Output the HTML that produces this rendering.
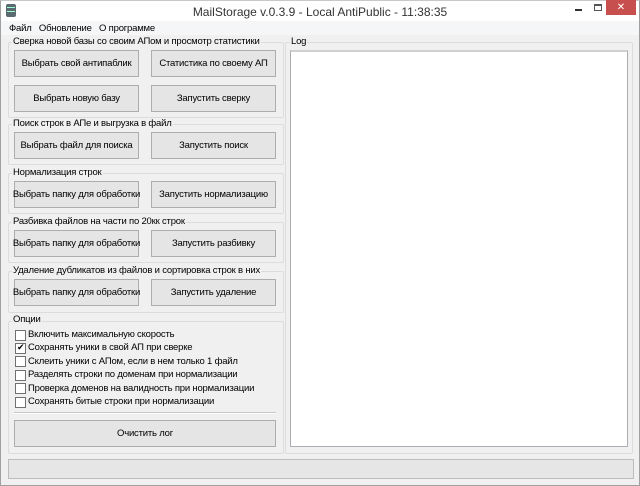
<!DOCTYPE html>
<html><head><meta charset="utf-8"><style>
*{box-sizing:border-box;margin:0;padding:0}
body{width:640px;height:486px;overflow:hidden;background:#f0f0f0;font-family:"Liberation Sans","DejaVu Sans",sans-serif;font-size:10px;color:#000;position:relative}
.a{position:absolute}
.win{left:0;top:0;width:640px;height:486px;border:1px solid #a0a0a0;border-top:1px solid #c8c8c8}
.title{left:1px;top:1px;width:638px;height:20px;background:#fff}
.menu{left:1px;top:21px;width:638px;height:14px;background:#f5f6f7}
.gb{border:1px solid #dcdcdc;border-radius:2px}
.gt{background:#f0f0f0;padding:0 1px;font-size:9.5px;letter-spacing:-0.2px;line-height:12px;white-space:nowrap}
.btn{background:#e5e5e5;border:1px solid #adadad;text-align:center;font-size:9.5px;letter-spacing:-0.2px;white-space:nowrap;display:flex;align-items:center;justify-content:center}
.cb{width:11px;height:11px;border:1px solid #707070;background:#fff}
.cl{font-size:9.5px;letter-spacing:-0.2px;line-height:12px;white-space:nowrap}
</style></head><body>
<div class="a win"></div>
<div class="a title"></div>
<svg class="a" style="left:6px;top:4px" width="10" height="13"><rect x="0" y="0" width="10" height="13" rx="2" fill="#5a6a70"/><rect x="1" y="3" width="8" height="1" fill="#9fc"/><rect x="1" y="7" width="8" height="1" fill="#9fc"/></svg>
<div class="a" style="left:0;top:5px;width:640px;text-align:center;font-size:12px;color:#333">MailStorage v.0.3.9 - Local AntiPublic - 11:38:35</div>
<div class="a" style="left:575px;top:9px;width:7px;height:2px;background:#333"></div>
<div class="a" style="left:194px;top:0"></div>
<div class="a" style="left:594px;top:4px;width:8px;height:7px;border:1px solid #555;border-top-width:2px"></div>
<div class="a" style="left:606px;top:0;width:30px;height:15px;background:#c7504f;color:#fff;text-align:center;font-size:10px;line-height:15px">✕</div>
<div class="a menu"></div>
<div class="a" style="left:9px;top:23px;font-size:9.5px;letter-spacing:-0.2px;white-space:nowrap">Файл&nbsp;&nbsp;&nbsp;Обновление&nbsp;&nbsp;&nbsp;О программе</div>

<div class="a gb" style="left:8px;top:42px;width:276px;height:76px"></div>
<div class="a gt" style="left:12px;top:36px">Сверка новой базы со своим АПом и просмотр статистики</div>
<div class="a btn" style="left:14px;top:50px;width:125px;height:27px">Выбрать свой антипаблик</div>
<div class="a btn" style="left:151px;top:50px;width:125px;height:27px">Статистика по своему АП</div>
<div class="a btn" style="left:14px;top:85px;width:125px;height:27px">Выбрать новую базу</div>
<div class="a btn" style="left:151px;top:85px;width:125px;height:27px">Запустить сверку</div>

<div class="a gb" style="left:8px;top:124px;width:276px;height:41px"></div>
<div class="a gt" style="left:12px;top:118px">Поиск строк в АПе и выгрузка в файл</div>
<div class="a btn" style="left:14px;top:132px;width:125px;height:27px">Выбрать файл для поиска</div>
<div class="a btn" style="left:151px;top:132px;width:125px;height:27px">Запустить поиск</div>

<div class="a gb" style="left:8px;top:173px;width:276px;height:41px"></div>
<div class="a gt" style="left:12px;top:167px">Нормализация строк</div>
<div class="a btn" style="left:14px;top:181px;width:125px;height:27px">Выбрать папку для обработки</div>
<div class="a btn" style="left:151px;top:181px;width:125px;height:27px">Запустить нормализацию</div>

<div class="a gb" style="left:8px;top:222px;width:276px;height:41px"></div>
<div class="a gt" style="left:12px;top:216px">Разбивка файлов на части по 20кк строк</div>
<div class="a btn" style="left:14px;top:230px;width:125px;height:27px">Выбрать папку для обработки</div>
<div class="a btn" style="left:151px;top:230px;width:125px;height:27px">Запустить разбивку</div>

<div class="a gb" style="left:8px;top:271px;width:276px;height:42px"></div>
<div class="a gt" style="left:12px;top:265px">Удаление дубликатов из файлов и сортировка строк в них</div>
<div class="a btn" style="left:14px;top:279px;width:125px;height:27px">Выбрать папку для обработки</div>
<div class="a btn" style="left:151px;top:279px;width:125px;height:27px">Запустить удаление</div>

<div class="a gb" style="left:8px;top:321px;width:276px;height:133px"></div>
<div class="a gt" style="left:12px;top:314px">Опции</div>
<div class="a cb" style="left:15px;top:330px"></div><div class="a cl" style="left:28px;top:329px">Включить максимальную скорость</div>
<div class="a cb" style="left:15px;top:343px"></div><div class="a" style="left:17px;top:342px;font-size:9px">✔</div><div class="a cl" style="left:28px;top:342px">Сохранять уники в свой АП при сверке</div>
<div class="a cb" style="left:15px;top:356px"></div><div class="a cl" style="left:28px;top:356px">Склеить уники с АПом, если в нем только 1 файл</div>
<div class="a cb" style="left:15px;top:370px"></div><div class="a cl" style="left:28px;top:369px">Разделять строки по доменам при нормализации</div>
<div class="a cb" style="left:15px;top:383px"></div><div class="a cl" style="left:28px;top:383px">Проверка доменов на валидность при нормализации</div>
<div class="a cb" style="left:15px;top:397px"></div><div class="a cl" style="left:28px;top:396px">Сохранять битые строки при нормализации</div>
<div class="a" style="left:14px;top:412px;width:262px;height:2px;border-top:1px solid #c8c8c8;border-bottom:1px solid #fff"></div>
<div class="a btn" style="left:14px;top:420px;width:262px;height:27px">Очистить лог</div>

<div class="a gb" style="left:285px;top:42px;width:348px;height:412px"></div>
<div class="a gt" style="left:290px;top:36px">Log</div>
<div class="a" style="left:290px;top:50px;width:338px;height:397px;background:#fff;border:1px solid #abadb3;border-top:2px solid #d0d0d0"></div>

<div class="a" style="left:8px;top:459px;width:626px;height:20px;background:#e6e6e6;border:1px solid #bcbcbc"></div>
</body></html>
